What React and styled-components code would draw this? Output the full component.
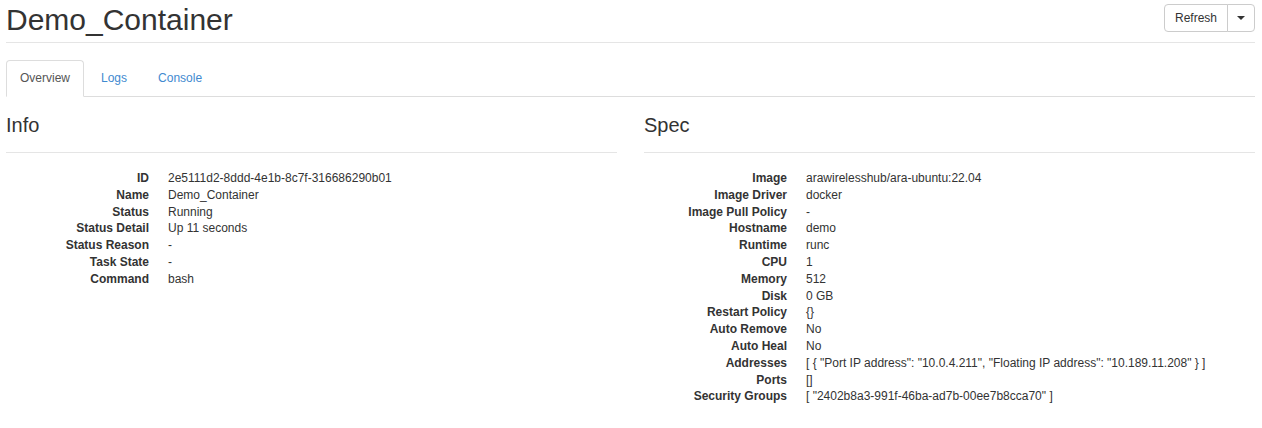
import React from "react";
import styled, { createGlobalStyle } from "styled-components";

const Global = createGlobalStyle`
  html, body { margin: 0; padding: 0; background: #fff; }
  body {
    font-family: "Liberation Sans", Arial, sans-serif;
    font-size: 12px;
    line-height: 16.8px;
    color: #333;
  }
  * { box-sizing: border-box; }
`;

const Page = styled.div`
  padding: 0 7px 0 6px;
`;

const Header = styled.div`
  display: flex;
  align-items: flex-start;
  justify-content: space-between;
  border-bottom: 1px solid #e5e5e5;
  padding-bottom: 4px;
`;

const Title = styled.h1`
  margin: 2px 0 0;
  font-size: 30px;
  line-height: 36px;
  font-weight: 400;
  color: #333;
`;

const BtnGroup = styled.div`
  display: flex;
  margin-top: 4px;
`;

const Btn = styled.button`
  font-family: inherit;
  font-size: 12px;
  line-height: 16px;
  color: #333;
  background: #fff;
  border: 1px solid #ccc;
  height: 28px;
  padding: 0 ${(p) => (p.$caret ? "9px" : "10px")};
  border-radius: ${(p) => (p.$caret ? "0 4px 4px 0" : "4px 0 0 4px")};
  margin-left: ${(p) => (p.$caret ? "-1px" : "0")};
  display: flex;
  align-items: center;
`;

const Caret = styled.span`
  width: 0;
  height: 0;
  border-left: 4px solid transparent;
  border-right: 4px solid transparent;
  border-top: 4px solid #333;
`;

const Tabs = styled.ul`
  list-style: none;
  margin: 17px 0 0;
  padding: 0;
  display: flex;
  border-bottom: 1px solid #ddd;
`;

const Tab = styled.li`
  margin-bottom: -1px;
  margin-right: 3px;
  padding: 9px 13px 10px;
  line-height: 16px;
  border: 1px solid ${(p) => (p.$active ? "#ddd" : "transparent")};
  border-bottom-color: ${(p) => (p.$active ? "#fff" : "transparent")};
  border-radius: 4px 4px 0 0;
  color: ${(p) => (p.$active ? "#555" : "#3f8ad0")};
  background: ${(p) => (p.$active ? "#fff" : "transparent")};
`;

const Columns = styled.div`
  display: grid;
  grid-template-columns: 1fr 1fr;
  column-gap: 27px;
`;

const Section = styled.div``;

const SectionTitle = styled.h3`
  margin: 16px 0 0;
  font-size: 20px;
  line-height: 24px;
  font-weight: 400;
  color: #333;
  padding-bottom: 15px;
  border-bottom: 1px solid #e5e5e5;
`;

const Dl = styled.dl`
  margin: 17px 0 0;
  display: grid;
  grid-template-columns: 143px 1fr;
  column-gap: 19px;
`;

const Dt = styled.dt`
  font-weight: 700;
  text-align: right;
  white-space: nowrap;
`;

const Dd = styled.dd`
  margin: 0;
`;

const info = [
  ["ID", "2e5111d2-8ddd-4e1b-8c7f-316686290b01"],
  ["Name", "Demo_Container"],
  ["Status", "Running"],
  ["Status Detail", "Up 11 seconds"],
  ["Status Reason", "-"],
  ["Task State", "-"],
  ["Command", "bash"],
];

const spec = [
  ["Image", "arawirelesshub/ara-ubuntu:22.04"],
  ["Image Driver", "docker"],
  ["Image Pull Policy", "-"],
  ["Hostname", "demo"],
  ["Runtime", "runc"],
  ["CPU", "1"],
  ["Memory", "512"],
  ["Disk", "0 GB"],
  ["Restart Policy", "{}"],
  ["Auto Remove", "No"],
  ["Auto Heal", "No"],
  ["Addresses", '[ { "Port IP address": "10.0.4.211", "Floating IP address": "10.189.11.208" } ]'],
  ["Ports", "[]"],
  ["Security Groups", '[ "2402b8a3-991f-46ba-ad7b-00ee7b8cca70" ]'],
];

const DetailList = ({ items }) => (
  <Dl>
    {items.map(([k, v]) => (
      <React.Fragment key={k}>
        <Dt>{k}</Dt>
        <Dd>{v}</Dd>
      </React.Fragment>
    ))}
  </Dl>
);

export default function App() {
  return (
    <Page>
      <Global />
      <Header>
        <Title>Demo_Container</Title>
        <BtnGroup>
          <Btn>Refresh</Btn>
          <Btn $caret>
            <Caret />
          </Btn>
        </BtnGroup>
      </Header>
      <Tabs>
        <Tab $active>Overview</Tab>
        <Tab>Logs</Tab>
        <Tab>Console</Tab>
      </Tabs>
      <Columns>
        <Section>
          <SectionTitle>Info</SectionTitle>
          <DetailList items={info} />
        </Section>
        <Section>
          <SectionTitle>Spec</SectionTitle>
          <DetailList items={spec} />
        </Section>
      </Columns>
    </Page>
  );
}
